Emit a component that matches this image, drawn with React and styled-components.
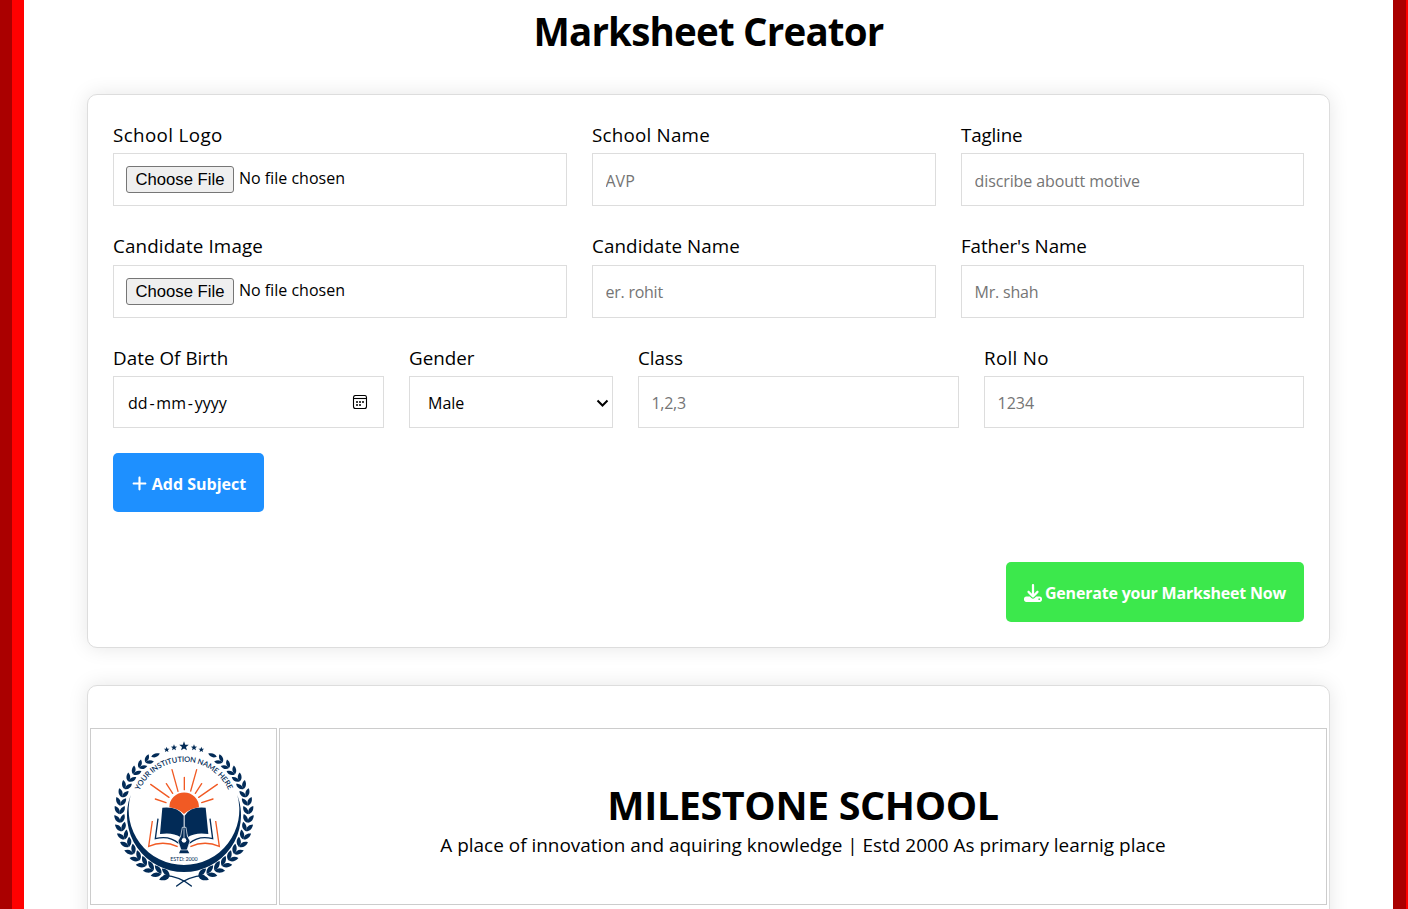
import React from 'react';
import styled, { createGlobalStyle } from 'styled-components';
import { FaPlus, FaDownload } from 'react-icons/fa6';

const GlobalStyle = createGlobalStyle`
  *, *::before, *::after { box-sizing: border-box; }
  body {
    margin: 0;
    overflow: hidden;
    background: #fff;
    color: #000;
    font-family: 'Open Sans', 'Noto Sans', sans-serif;
  }
`;

const Page = styled.div`
  display: flex;
  justify-content: space-between;
  height: 909px;
  overflow: hidden;
`;

const Stripe = styled.div`
  flex: none;
  width: ${(p) => p.$width}px;
  border-left: ${(p) => p.$dark}px solid #aa0000;
  background: #ff0000;
`;

const Main = styled.main`
  display: flex;
  flex-direction: column;
  width: 1243px;
  margin: 0 63px;
`;

const Title = styled.h1`
  flex: none;
  margin: 0;
  height: 94px;
  padding-top: 3px;
  text-align: center;
  font-size: 38.5px;
  line-height: 56px;
  font-weight: 700;
  letter-spacing: -0.8px;
`;

const Card = styled.section`
  flex: none;
  background: #fff;
  border: 1px solid #ddd;
  border-radius: 10px;
  box-shadow: 0 0 20px rgba(0, 0, 0, 0.1);
`;

const FormCard = styled(Card)`
  display: flex;
  flex-direction: column;
  height: 554px;
  padding: 24px 25px 25px;
`;

const FieldRow = styled.div`
  display: grid;
  grid-template-columns: ${(p) => p.$columns};
  column-gap: 25px;
  margin-bottom: 25px;
`;

const Field = styled.label`
  display: flex;
  flex-direction: column;
`;

const Label = styled.span`
  height: ${(p) => p.$height || 34}px;
  line-height: ${(p) => p.$line || 32}px;
  font-size: 18.8px;
  letter-spacing: ${(p) => p.$track || 0}px;
  white-space: nowrap;
`;

const Control = styled.div`
  display: flex;
  align-items: center;
  height: ${(p) => p.$height || 53}px;
  padding: 0 12px;
  border: 1px solid #ddd;
  background: #fff;
  font-size: 16px;
`;

const TextInput = styled.input`
  width: 100%;
  height: ${(p) => p.$height || 53}px;
  padding: ${(p) => (p.$raised ? 1 : 3)}px 13px 0 12.5px;
  border: 1px solid #ddd;
  border-radius: 0;
  outline: none;
  font-family: inherit;
  font-size: 16px;
  letter-spacing: ${(p) => p.$track || 0}px;
  &::placeholder { color: #757575; opacity: 1; }
`;

const FileButton = styled.button`
  width: 108px;
  height: 27px;
  padding: 0;
  border: 1px solid #767676;
  border-radius: 3px;
  background: #efefef;
  color: #000;
  font-family: 'Liberation Sans', Arial, sans-serif;
  font-size: 16.67px;
  line-height: 25px;
`;

const FileStatus = styled.span`
  margin: 0 0 3px 5px;
`;

const DateControl = styled(Control)`
  justify-content: space-between;
  padding: 2px 15px 0 14px;
`;

const DateDash = styled.span`
  padding: 0 1.8px;
`;

const SelectControl = styled(Control)`
  justify-content: space-between;
  padding: 2px 3px 0 18px;
`;

const ActionButton = styled.button`
  display: flex;
  align-items: center;
  justify-content: center;
  flex: none;
  align-self: flex-start;
  gap: ${(p) => p.$gap}px;
  width: ${(p) => p.$width}px;
  height: ${(p) => p.$height}px;
  padding: 2px 0 0;
  border: 0;
  border-radius: 5px;
  background: ${(p) => p.$color};
  color: #fff;
  font-family: inherit;
  font-size: 16px;
  font-weight: 700;
  letter-spacing: ${(p) => p.$track}px;
  white-space: nowrap;
`;

const SubmitArea = styled.div`
  display: flex;
  justify-content: flex-end;
  margin-top: 50px;
`;

const SheetCard = styled(Card)`
  display: grid;
  grid-template-columns: 187px 1fr;
  grid-auto-rows: 177px;
  gap: 2px;
  height: 700px;
  margin-top: 37px;
  padding: 42px 2px 0;
`;

const Cell = styled.div`
  display: flex;
  flex-direction: column;
  align-items: center;
  justify-content: center;
  border: 1px solid #ccc;
`;

const LogoCell = styled(Cell)`
  justify-content: flex-start;
  padding: 9px 0 0;
`;

const SchoolName = styled.h2`
  margin: 2px 0 0;
  font-size: 39.5px;
  line-height: 54px;
  letter-spacing: -0.4px;
`;

const Motto = styled.p`
  margin: 0;
  font-size: 18.95px;
  line-height: 26px;
`;

const NAVY = '#022b57';
const ORANGE = '#f15a24';

function starPoints(cx, cy, r) {
  return Array.from({ length: 10 }, (_, i) => {
    const a = (Math.PI / 5) * i - Math.PI / 2;
    const k = i % 2 ? r * 0.42 : r;
    return `${(cx + k * Math.cos(a)).toFixed(1)},${(cy + k * Math.sin(a)).toFixed(1)}`;
  }).join(' ');
}

const LEAF = 'M0 4 C-9 -4 -9 -17 -1 -28 C9 -18 9 -6 0 4Z';

function Laurel() {
  const pairs = Array.from({ length: 18 }, (_, i) => ({ deg: 197 + i * 7.6, size: 1.02 - i * 0.013 }));
  return (
    <g fill={NAVY}>
      {pairs.map(({ deg, size }) => (
        <g key={deg} transform={`rotate(${deg} 282 266) translate(282 73) scale(${size})`}>
          <path d={LEAF} transform="translate(-10 -2) rotate(58)" />
          <path d={LEAF} transform="translate(-10 3) rotate(119)" />
        </g>
      ))}
      <path d={LEAF} transform="translate(187 94) scale(.85) rotate(72)" />
    </g>
  );
}

function SchoolCrest() {
  return (
    <svg width="150" height="151" viewBox="57 39 450 453" role="img" aria-label="School crest">
      <defs>
        <path id="crest-arc" d="M148 197 A147 147 0 0 1 416 197" />
      </defs>
      {[[230, 74, 9], [252, 68, 10], [282, 64, 15], [312, 68, 10], [334, 74, 9]].map(([x, y, r]) => (
        <polygon key={x} points={starPoints(x, y, r)} fill={NAVY} />
      ))}
      <Laurel />
      <g transform="matrix(-1 0 0 1 564 0)"><Laurel /></g>
      <g fill="none" stroke={NAVY} strokeWidth="4" strokeLinecap="round">
        <path d="M222 451 C256 453 282 464 304 483" />
        <path d="M342 451 C308 453 282 464 260 483" />
      </g>
      <path d="M122 210 A171 171 0 1 0 442 210 A166 166 0 1 1 122 210Z" fill={NAVY} />
      <text fill={NAVY} fontFamily="Lato, sans-serif" fontSize="22.5" fontWeight="600">
        <textPath href="#crest-arc" textLength="335">YOUR INSTITUTION NAME HERE</textPath>
      </text>
      <g stroke={ORANGE} strokeWidth="4" strokeLinecap="round">
        <path d="M246 134 L264 199 M320 134 L302 198 M283 157 V194 M229 176 L248 205 M335 176 L316 205 M182 178 L237 217 M382 178 L326 217 M196 222 L228 233 M369 222 L335 233" />
      </g>
      <path d="M238 247 A44 44 0 0 1 327 247 Q297 252 282 267 Q268 252 238 247Z" fill={ORANGE} />
      <path d="M217 248 Q263 243 281 272 V307 L271 336 Q248 321 210 327Z" fill={NAVY} />
      <path d="M347 248 Q301 243 284 272 V307 L294 336 Q317 321 355 327Z" fill={NAVY} />
      <g fill="none" strokeWidth="4">
        <path d="M187 288 L176 364 Q220 345 263 365 M377 288 L388 364 Q344 345 301 365" stroke={ORANGE} />
        <path d="M204 281 L196 341 Q237 330 266 355 M360 281 L368 341 Q327 330 298 355" stroke={NAVY} />
      </g>
      <path
        d="M277 307 L272 333 L264 348 L273 375 H291 L300 348 L292 333 L288 307Z"
        fill={NAVY} stroke="#fff" strokeWidth="2"
      />
      <path d="M271 376 H293 L298 385 H267Z" fill={NAVY} />
      <path d="M282 310 V340" stroke="#fff" strokeWidth="2" />
      <circle cx="282" cy="346" r="7" fill="#fff" />
      <text
        x="282" y="407" textAnchor="middle" textLength="82" fill={NAVY}
        fontFamily="Lato, sans-serif" fontSize="16" fontWeight="400"
      >
        ESTD: 2000
      </text>
    </svg>
  );
}

function CalendarIcon() {
  return (
    <svg width="16" height="16" viewBox="0 0 16 16" fill="none" stroke="#000">
      <rect x="1.5" y="0.5" width="13" height="13" rx="2" strokeWidth="1.1" />
      <path d="M1.5 3.5H14.5" strokeWidth="1.1" />
      <path d="M4 7H12M4 10H9.5" strokeWidth="1.7" strokeDasharray="2 1" />
    </svg>
  );
}

function ChevronIcon() {
  return (
    <svg width="13" height="9" viewBox="0 0 13 9" fill="none">
      <path d="M1.5 1.5L6.5 6.5L11.5 1.5" stroke="#000" strokeWidth="2" />
    </svg>
  );
}

function FileField({ label, track, line }) {
  return (
    <Field as="div">
      <Label $track={track} $line={line}>{label}</Label>
      <Control>
        <FileButton type="button">Choose File</FileButton>
        <FileStatus>No file chosen</FileStatus>
      </Control>
    </Field>
  );
}

function TextField({ label, placeholder, track, inputTrack, line, labelHeight, height }) {
  return (
    <Field>
      <Label $track={track} $height={labelHeight} $line={line}>{label}</Label>
      <TextInput placeholder={placeholder} $track={inputTrack} $height={height} $raised={Boolean(line)} />
    </Field>
  );
}

export default function App() {
  return (
    <Page>
      <GlobalStyle />
      <Stripe $width={24} $dark={12} />
      <Main>
        <Title>Marksheet Creator</Title>
        <FormCard>
          <FieldRow $columns="454px 344px 343px">
            <FileField label="School Logo" track={0.37} />
            <TextField label="School Name" track={0.22} placeholder="AVP" />
            <TextField label="Tagline" track={-0.15} placeholder="discribe aboutt motive" inputTrack={-0.1} />
          </FieldRow>
          <FieldRow $columns="454px 344px 343px">
            <FileField label="Candidate Image" track={0.14} line={30} />
            <TextField label="Candidate Name" track={0.1} placeholder="er. rohit" inputTrack={-0.25} line={30} />
            <TextField label="Father's Name" track={-0.1} placeholder="Mr. shah" inputTrack={-0.2} line={30} />
          </FieldRow>
          <FieldRow $columns="271px 204px 321px 320px">
            <Field as="div">
              <Label $track={0.05} $height={33} $line={30}>Date Of Birth</Label>
              <DateControl $height={52}>
                <span>dd<DateDash>-</DateDash>mm<DateDash>-</DateDash>yyyy</span>
                <CalendarIcon />
              </DateControl>
            </Field>
            <Field as="div">
              <Label $height={33} $line={30}>Gender</Label>
              <SelectControl $height={52}>
                <span>Male</span>
                <ChevronIcon />
              </SelectControl>
            </Field>
            <TextField label="Class" placeholder="1,2,3" inputTrack={-0.3} line={30} labelHeight={33} height={52} />
            <TextField label="Roll No" track={0.3} placeholder="1234" line={30} labelHeight={33} height={52} />
          </FieldRow>
          <ActionButton type="button" $color="#1e90ff" $width={151} $height={59} $gap={4} $track={0}>
            <FaPlus size={17} />
            <span>Add Subject</span>
          </ActionButton>
          <SubmitArea>
            <ActionButton type="button" $color="#3ce84c" $width={298} $height={60} $gap={3} $track={-0.2}>
              <FaDownload size={18} />
              <span>Generate your Marksheet Now</span>
            </ActionButton>
          </SubmitArea>
        </FormCard>
        <SheetCard>
          <LogoCell><SchoolCrest /></LogoCell>
          <Cell>
            <SchoolName>MILESTONE SCHOOL</SchoolName>
            <Motto>A place of innovation and aquiring knowledge | Estd 2000 As primary learnig place</Motto>
          </Cell>
        </SheetCard>
      </Main>
      <Stripe $width={15} $dark={13} />
    </Page>
  );
}
